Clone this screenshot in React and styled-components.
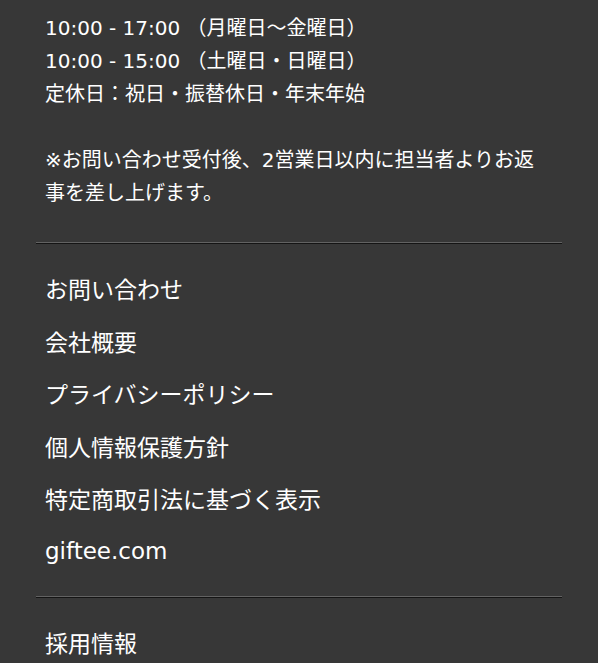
import React from "react";
import styled, { createGlobalStyle } from "styled-components";

const GlobalStyle = createGlobalStyle`
  html, body {
    margin: 0;
    padding: 0;
    background: #373737;
  }
  body {
    font-family: "DejaVu Sans", "Noto Sans CJK JP", sans-serif;
    color: #ffffff;
    -webkit-font-smoothing: antialiased;
  }
`;

const Footer = styled.footer`
  padding: 0 36px;
  min-height: 663px;
  box-sizing: border-box;
`;

const Info = styled.div`
  padding: 12px 9px 32px;
  font-size: 20px;
  line-height: 33px;
`;

const Para = styled.p`
  margin: 0 0 ${(props) => (props.last ? 0 : 33)}px;
`;

const Divider = styled.hr`
  margin: 0;
  height: 0;
  border: 0;
  border-top: 1px solid #626262;
  border-bottom: 1px solid #141414;
`;

const NavList = styled.ul`
  list-style: none;
  margin: 0;
  padding: 18px 9px 19px;
`;

const NavItem = styled.li`
  height: 52.5px;
  display: flex;
  align-items: center;
  font-size: 23px;
`;

const NavLink = styled.a`
  color: #ffffff;
  text-decoration: none;
`;

const mainLinks = [
  "お問い合わせ",
  "会社概要",
  "プライバシーポリシー",
  "個人情報保護方針",
  "特定商取引法に基づく表示",
  "giftee.com",
];

const subLinks = ["採用情報"];

export default function App() {
  return (
    <>
      <GlobalStyle />
      <Footer>
        <Info>
          <Para>
            10:00 - 17:00 （月曜日～金曜日）
            <br />
            10:00 - 15:00 （土曜日・日曜日）
            <br />
            定休日：祝日・振替休日・年末年始
          </Para>
          <Para last>
            ※お問い合わせ受付後、2営業日以内に担当者よりお返事を差し上げます。
          </Para>
        </Info>
        <Divider />
        <NavList>
          {mainLinks.map((label) => (
            <NavItem key={label}>
              <NavLink href="#">{label}</NavLink>
            </NavItem>
          ))}
        </NavList>
        <Divider />
        <NavList>
          {subLinks.map((label) => (
            <NavItem key={label}>
              <NavLink href="#">{label}</NavLink>
            </NavItem>
          ))}
        </NavList>
      </Footer>
    </>
  );
}
